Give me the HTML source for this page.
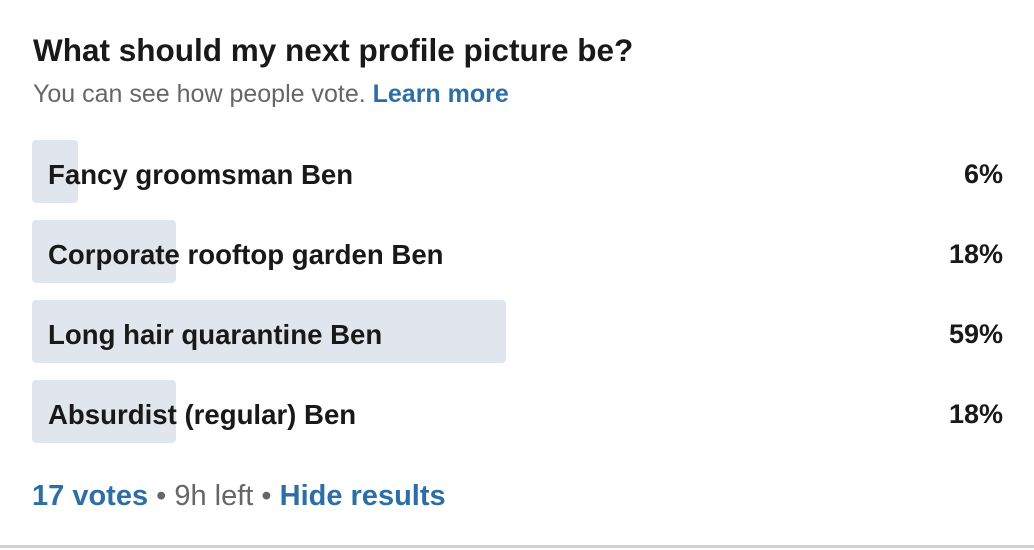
<!DOCTYPE html>
<html><head><style>
body{margin:0;width:1034px;height:550px;background:#fff;font-family:"Liberation Sans",sans-serif;position:relative;overflow:hidden}
.a{position:absolute;white-space:nowrap}
.t{left:33px;top:32px;font-size:31.5px;font-weight:bold;color:#191919}
.s{left:33px;top:80px;font-size:25px;color:#666}
.b{color:#2e6ea6;font-weight:bold}
.bar{position:absolute;left:32px;height:63px;background:#e1e6ee;border-radius:4px}
.l{left:48px;font-size:27.6px;font-weight:bold;color:#191919}
.p{right:31px;font-size:27px;font-weight:bold;color:#191919}
.f{left:32px;top:480px;font-size:29px;color:#666}
.line{position:absolute;left:0;right:0;top:545px;height:3px;background:#d0d0d0}
</style></head><body>
<div class="a t">What should my next profile picture be?</div>
<div class="a s">You can see how people vote. <span class="b">Learn more</span></div>
<div class="bar" style="top:140px;width:46px"></div>
<div class="bar" style="top:220px;width:144px"></div>
<div class="bar" style="top:300px;width:474px"></div>
<div class="bar" style="top:380px;width:144px"></div>
<div class="a l" style="top:159px">Fancy groomsman Ben</div>
<div class="a p" style="top:159px">6%</div>
<div class="a l" style="top:239px">Corporate rooftop garden Ben</div>
<div class="a p" style="top:239px">18%</div>
<div class="a l" style="top:319px">Long hair quarantine Ben</div>
<div class="a p" style="top:319px">59%</div>
<div class="a l" style="top:399px">Absurdist (regular) Ben</div>
<div class="a p" style="top:399px">18%</div>
<div class="a f"><span class="b">17 votes</span> • 9h left • <span class="b">Hide results</span></div>
<div class="line"></div>
</body></html>
